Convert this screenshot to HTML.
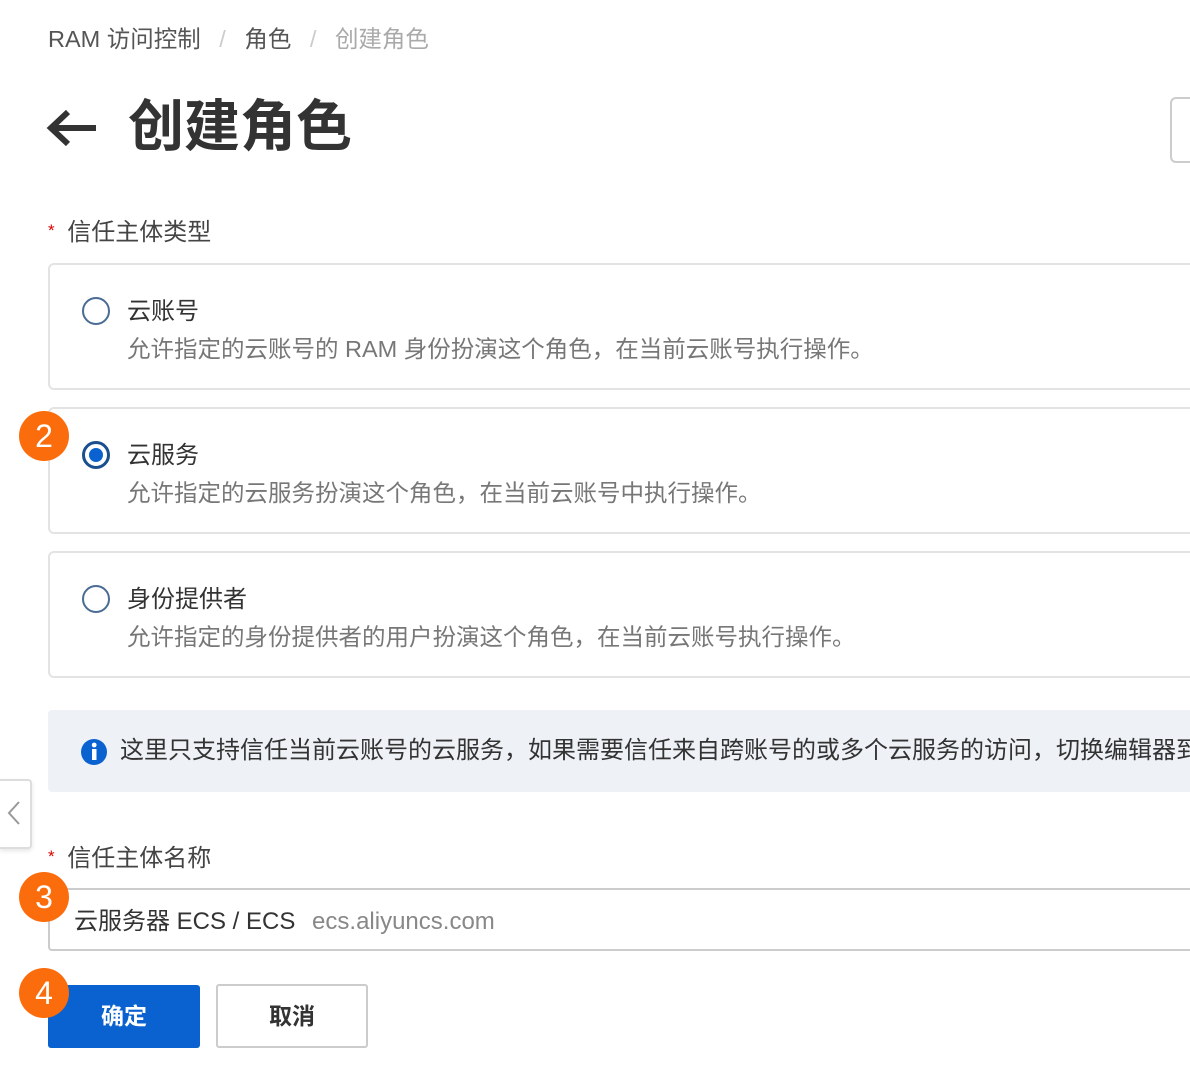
<!DOCTYPE html><html><head><meta charset="utf-8"><style>
body{margin:0;width:1190px;height:1084px;overflow:hidden;background:#fff;font-family:"Liberation Sans","Noto Sans CJK SC",sans-serif;position:relative;color:#333}
.a{position:absolute;white-space:nowrap}
.card{position:absolute;left:48px;width:1160px;height:127px;border:2px solid #e3e3e3;border-radius:6px;box-sizing:border-box}
.radio{position:absolute;left:82px;width:28px;height:28px;border:2px solid #4a6c94;border-radius:50%;box-sizing:border-box}
.t{font-size:24px;line-height:30px;color:#333}
.d{font-size:23.5px;line-height:30px;color:#777}
.badge{position:absolute;width:50px;height:50px;border-radius:50%;background:#fb6c0c;color:#fff;font-size:32px;text-align:center;line-height:50px;font-family:"Liberation Sans",sans-serif}
</style></head><body>
<div class="a" style="left:48px;top:24px;font-size:23.5px;line-height:30px;color:#555">RAM 访问控制 <span style="color:#ccc;margin:0 12px">/</span> 角色 <span style="color:#ccc;margin:0 12px">/</span> <span style="color:#aaa">创建角色</span></div>
<svg class="a" style="left:46px;top:107px" width="52" height="42" viewBox="0 0 52 42"><path d="M50 21H6M22 5L5 21l17 16" stroke="#333" stroke-width="6" fill="none"/></svg>
<div class="a" style="left:128px;top:94px;font-size:56px;line-height:66px;font-weight:bold;color:#333">创建角色</div>
<div class="a" style="left:1170px;top:97px;width:40px;height:62px;border:2px solid #ccc;border-radius:6px"></div>
<div class="a" style="left:48px;top:216px;font-size:24px;line-height:30px;color:#444"><span style="color:#d00;font-size:17px;vertical-align:4px;margin-right:6px">*</span> 信任主体类型</div>
<div class="card" style="top:263px"></div>
<div class="radio" style="top:297px"></div>
<div class="a t" style="left:127px;top:297px">云账号</div>
<div class="a d" style="left:127px;top:334px">允许指定的云账号的 RAM 身份扮演这个角色，在当前云账号执行操作。</div>
<div class="card" style="top:407px"></div>
<div class="radio" style="top:441px;border-color:#1a4f8f;border-width:3px"><div style="position:absolute;left:4px;top:4px;width:14px;height:14px;border-radius:50%;background:#0a62d0"></div></div>
<div class="a t" style="left:127px;top:441px">云服务</div>
<div class="a d" style="left:127px;top:478px">允许指定的云服务扮演这个角色，在当前云账号中执行操作。</div>
<div class="badge" style="left:19px;top:411px">2</div>
<div class="card" style="top:551px"></div>
<div class="radio" style="top:585px"></div>
<div class="a t" style="left:127px;top:585px">身份提供者</div>
<div class="a d" style="left:127px;top:622px">允许指定的身份提供者的用户扮演这个角色，在当前云账号执行操作。</div>
<div class="a" style="left:48px;top:710px;width:1160px;height:82px;background:#eef1f6;border-radius:4px"></div>
<svg class="a" style="left:80px;top:738px" width="28" height="28" viewBox="0 0 28 28"><circle cx="14" cy="14" r="13" fill="#0a62d0"/><rect x="12" y="11" width="4.5" height="11" fill="#fff"/><circle cx="14.2" cy="7" r="2.4" fill="#fff"/></svg>
<div class="a" style="left:120px;top:736px;font-size:24px;line-height:30px;color:#333">这里只支持信任当前云账号的云服务，如果需要信任来自跨账号的或多个云服务的访问，切换编辑器到</div>
<div class="a" style="left:0;top:779px;width:30px;height:66px;border:2px solid #ddd;border-left:none;border-radius:0 4px 4px 0;background:#fff;box-shadow:0 2px 4px rgba(0,0,0,.1)"></div>
<svg class="a" style="left:6px;top:800px" width="16" height="26" viewBox="0 0 16 26"><path d="M13 2L3 13l10 11" stroke="#999" stroke-width="2" fill="none"/></svg>
<div class="a" style="left:48px;top:842px;font-size:24px;line-height:30px;color:#444"><span style="color:#d00;font-size:17px;vertical-align:4px;margin-right:6px">*</span> 信任主体名称</div>
<div class="a" style="left:48px;top:888px;width:1160px;height:63px;border:2px solid #ccc;border-radius:4px;box-sizing:border-box"></div>
<div class="a" style="left:74px;top:907px;font-size:24px;line-height:30px;color:#333">云服务器 ECS / ECS <span style="color:#888;margin-left:10px">ecs.aliyuncs.com</span></div>
<div class="badge" style="left:19px;top:872px">3</div>
<div class="a" style="left:48px;top:985px;width:152px;height:63px;background:#0a62d0;border-radius:3px;color:#fff;font-size:23px;font-weight:bold;text-align:center;line-height:63px">确定</div>
<div class="a" style="left:216px;top:984px;width:152px;height:64px;border:2px solid #ccc;border-radius:3px;box-sizing:border-box;color:#333;font-size:23px;font-weight:bold;text-align:center;line-height:60px">取消</div>
<div class="badge" style="left:19px;top:968px">4</div>
</body></html>
